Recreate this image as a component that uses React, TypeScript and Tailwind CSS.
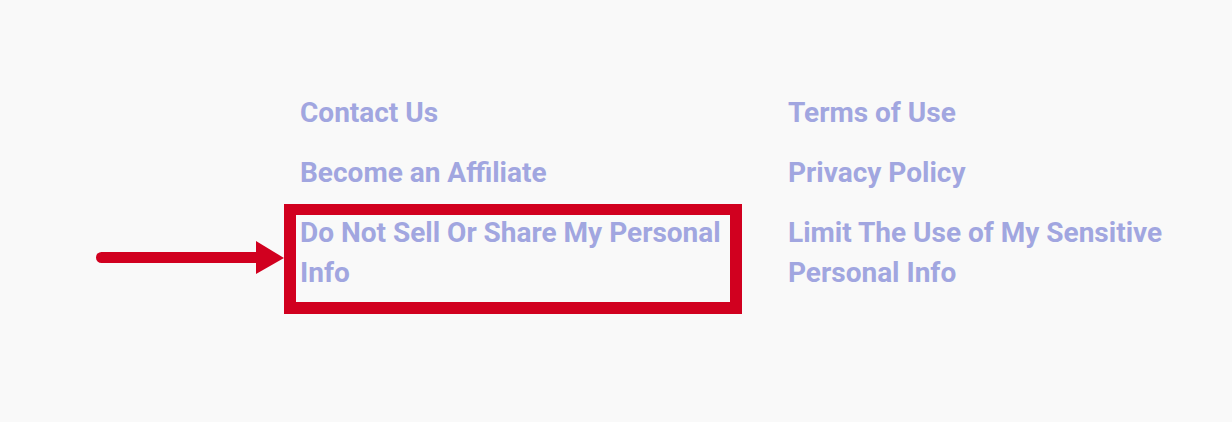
const leftLinks = ['Contact Us', 'Become an Affiliate'];
const rightLinks = ['Terms of Use', 'Privacy Policy', 'Limit The Use of My Sensitive Personal Info'];

function LinkItem({ label }: { label: string }) {
  return (
    <a href="#" className="block text-[28px] leading-10 font-bold text-[#a1a6e0]">
      {label}
    </a>
  );
}

export default function App() {
  return (
    <div
      className="min-h-[422px] w-full bg-[#f9f9f9] pt-[93px] pl-[300px]"
      style={{ fontFamily: 'Roboto, "Liberation Sans", sans-serif' }}
    >
      <div className="grid grid-cols-[440px_440px] gap-x-[48px]">
        <div className="flex flex-col gap-5">
          {leftLinks.map((l) => (
            <LinkItem key={l} label={l} />
          ))}
          <div className="relative">
            <LinkItem label="Do Not Sell Or Share My Personal Info" />
            {/* highlight box */}
            <div className="pointer-events-none absolute top-[-9px] left-[-16px] h-[110px] w-[458px] border-[12px] border-t-[11px] border-[#d1001f]" />
            {/* arrow */}
            <svg
              className="pointer-events-none absolute top-[28px] left-[-204px]"
              width="189"
              height="34"
              viewBox="0 0 189 34"
            >
              <path d="M5.5 16.5 H162" stroke="#d1001f" strokeWidth="11" strokeLinecap="round" />
              <polygon points="160,0 188,17 160,33" fill="#d1001f" />
            </svg>
          </div>
        </div>
        <div className="flex flex-col gap-5">
          {rightLinks.map((l) => (
            <LinkItem key={l} label={l} />
          ))}
        </div>
      </div>
    </div>
  );
}
